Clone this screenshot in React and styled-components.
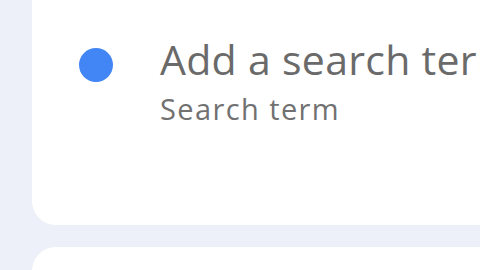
import styled, { createGlobalStyle } from "styled-components";

const GlobalStyle = createGlobalStyle`
  html, body {
    margin: 0;
    padding: 0;
    background: #eef0f9;
    overflow: hidden;
  }
  body {
    font-family: "Open Sans", Roboto, sans-serif;
  }
`;

const Page = styled.div`
  width: 480px;
  height: 310px;
  overflow: hidden;
  padding-left: 32px;
  box-sizing: border-box;
  display: flex;
  flex-direction: column;
  gap: 22px;
  margin-top: -40px;
`;

const Card = styled.div`
  background: #ffffff;
  border-radius: 24px 0 0 24px;
  height: ${(p) => p.height}px;
  flex-shrink: 0;
  display: flex;
  align-items: flex-start;
  padding-left: 47px;
  box-sizing: border-box;
`;

const Dot = styled.span`
  width: 34px;
  height: 34px;
  border-radius: 50%;
  background: #4285f4;
  flex-shrink: 0;
  margin-top: 88px;
`;

const Texts = styled.div`
  margin-left: 47px;
  margin-top: 75px;
  display: flex;
  flex-direction: column;
  white-space: nowrap;
`;

const Title = styled.div`
  font-size: 41px;
  line-height: 48px;
  letter-spacing: 0.3px;
  color: #6a6a6a;
`;

const Subtitle = styled.div`
  font-size: 29px;
  line-height: 36px;
  letter-spacing: 1.4px;
  color: #717171;
  margin-top: 8px;
`;

export default function App() {
  return (
    <>
      <GlobalStyle />
      <Page>
        <Card height={265}>
          <Dot />
          <Texts>
            <Title>Add a search term</Title>
            <Subtitle>Search term</Subtitle>
          </Texts>
        </Card>
        <Card height={120} />
      </Page>
    </>
  );
}
